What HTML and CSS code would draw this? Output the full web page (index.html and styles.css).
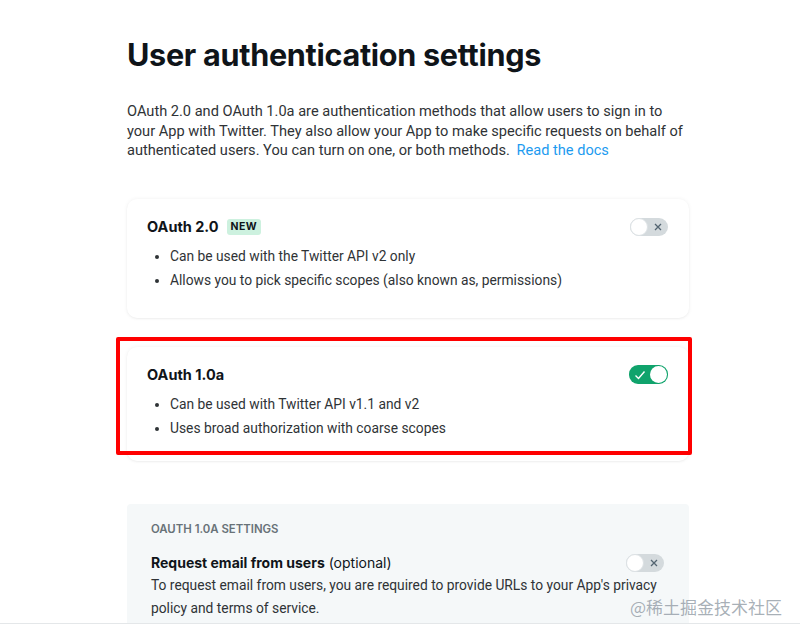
FILE: index.html
```html
<!DOCTYPE html>
<html lang="en">
<head>
    <meta charset="UTF-8">
    <meta name="viewport" content="width=device-width, initial-scale=1.0">
    <title>User authentication settings</title>
    <link rel="stylesheet" href="styles.css">
</head>
<body>
    <div class="viewport">
        <div class="page">
            <h1>User authentication settings</h1>
            <p class="intro">OAuth 2.0 and OAuth 1.0a are authentication methods that allow users to sign in to your App with Twitter. They also allow your App to make specific requests on behalf of authenticated users. You can turn on one, or both methods. <a href="#" class="docs-link">Read the docs</a></p>

            <div class="card">
                <div class="card-head">
                    <div class="card-title">OAuth 2.0 <span class="badge">NEW</span></div>
                    <span class="toggle">
                        <span class="knob"></span>
                        <svg class="toggle-icon" width="10" height="10" viewBox="0 0 10 10"><path d="M2 2 L8 8 M8 2 L2 8" stroke="#536471" stroke-width="1.3" fill="none"/></svg>
                    </span>
                </div>
                <ul class="points">
                    <li>Can be used with the Twitter API v2 only</li>
                    <li>Allows you to pick specific scopes (also known as, permissions)</li>
                </ul>
            </div>

            <div class="card card-selected">
                <div class="card-head">
                    <div class="card-title">OAuth 1.0a</div>
                    <span class="toggle toggle-on">
                        <svg class="toggle-icon" width="12" height="10" viewBox="0 0 12 10"><path d="M1.5 5.5 L4.5 8.5 L10.5 1.5" stroke="#ffffff" stroke-width="1.4" fill="none"/></svg>
                        <span class="knob"></span>
                    </span>
                </div>
                <ul class="points">
                    <li>Can be used with Twitter API v1.1 and v2</li>
                    <li>Uses broad authorization with coarse scopes</li>
                </ul>
                <div class="highlight"></div>
            </div>

            <div class="settings">
                <div class="settings-label">OAUTH 1.0A SETTINGS</div>
                <div class="setting-head">
                    <div class="setting-title"><b>Request email from users</b> (optional)</div>
                    <span class="toggle">
                        <span class="knob"></span>
                        <svg class="toggle-icon" width="10" height="10" viewBox="0 0 10 10"><path d="M2 2 L8 8 M8 2 L2 8" stroke="#536471" stroke-width="1.3" fill="none"/></svg>
                    </span>
                </div>
                <p class="setting-desc">To request email from users, you are required to provide URLs to your App's privacy policy and terms of service.</p>
            </div>
        </div>
        <div class="watermark">@稀土掘金技术社区</div>
    </div>
</body>
</html>
```

FILE: styles.css
```css
body {
    margin: 0;
    padding: 0;
    background: #ffffff;
    font-family: 'Inter', 'Noto Sans', sans-serif;
    color: #0f1419;
}
.viewport {
    position: relative;
    height: 623px;
    overflow: hidden;
    border-bottom: 1px solid #e4e7e9;
}
.page {
    width: 562px;
    margin-left: 127px;
    padding-top: 36px;
}
h1 {
    margin: 0;
    font-size: 30.6px;
    line-height: 38px;
    font-weight: 700;
    letter-spacing: -0.3px;
    color: #0f1419;
}
.intro {
    margin: 28px 0 0;
    font-family: 'Roboto', sans-serif;
    font-size: 14.6px;
    line-height: 19.5px;
    color: #2f3336;
}
.docs-link {
    color: #1d9bf0;
    text-decoration: none;
    margin-left: 3px;
}
.card {
    position: relative;
    margin-top: 38px;
    padding: 18px 21px 26px 20px;
    background: #ffffff;
    border-radius: 10px;
    box-shadow: 0 0 4px rgba(0, 0, 0, 0.06), 0 1px 2px rgba(0, 0, 0, 0.04);
}
.card-selected {
    margin-top: 29px;
    padding-bottom: 21px;
}
.card-head {
    display: flex;
    align-items: center;
    justify-content: space-between;
    height: 20px;
}
.card-title {
    font-size: 14.5px;
    font-weight: 700;
    display: flex;
    align-items: center;
}
.badge {
    margin-left: 8px;
    padding: 1px 4px;
    background: #cdf1df;
    border-radius: 3px;
    font-size: 10.5px;
    line-height: 14px;
    letter-spacing: 0.4px;
    font-weight: 700;
    color: #0f1419;
}
.points {
    margin: 7px 0 0;
    padding-left: 23px;
    font-family: 'Roboto', sans-serif;
    font-size: 13.8px;
    line-height: 24px;
    color: #2f3336;
}
.highlight {
    position: absolute;
    left: -11px;
    top: -10px;
    width: 568px;
    height: 110px;
    border: 4px solid #ff0000;
    border-radius: 2px;
}
.toggle {
    display: flex;
    align-items: center;
    justify-content: space-between;
    box-sizing: border-box;
    width: 38px;
    height: 18px;
    padding: 0 5px 0 0;
    border-radius: 9px;
    background: #d4dadd;
}
.toggle .knob {
    width: 18px;
    height: 18px;
    box-sizing: border-box;
    border-radius: 50%;
    background: #ffffff;
    border: 1px solid #dde2e5;
}
.toggle-on {
    width: 39px;
    height: 19px;
    padding: 0 0 0 5px;
    background: #10a36c;
}
.toggle-on .knob {
    width: 17px;
    height: 17px;
    margin-right: 1px;
    border: none;
}
.settings {
    margin-top: 43px;
    padding: 18px 25px 20px 24px;
    background: #f5f8f9;
    border-radius: 4px;
}
.settings-label {
    font-size: 11.4px;
    line-height: 14px;
    font-weight: 600;
    color: #687278;
}
.setting-head {
    display: flex;
    align-items: center;
    justify-content: space-between;
    margin-top: 17px;
    height: 20px;
}
.setting-title {
    font-size: 14px;
    color: #0f1419;
}
.setting-desc {
    margin: 1px 0 0;
    font-family: 'Roboto', sans-serif;
    font-size: 13.8px;
    line-height: 23px;
    color: #2f3336;
}
.watermark {
    position: absolute;
    left: 630px;
    top: 594px;
    font-family: 'Noto Sans CJK SC', sans-serif;
    font-size: 17px;
    color: rgba(140, 150, 160, 0.75);
}
```
